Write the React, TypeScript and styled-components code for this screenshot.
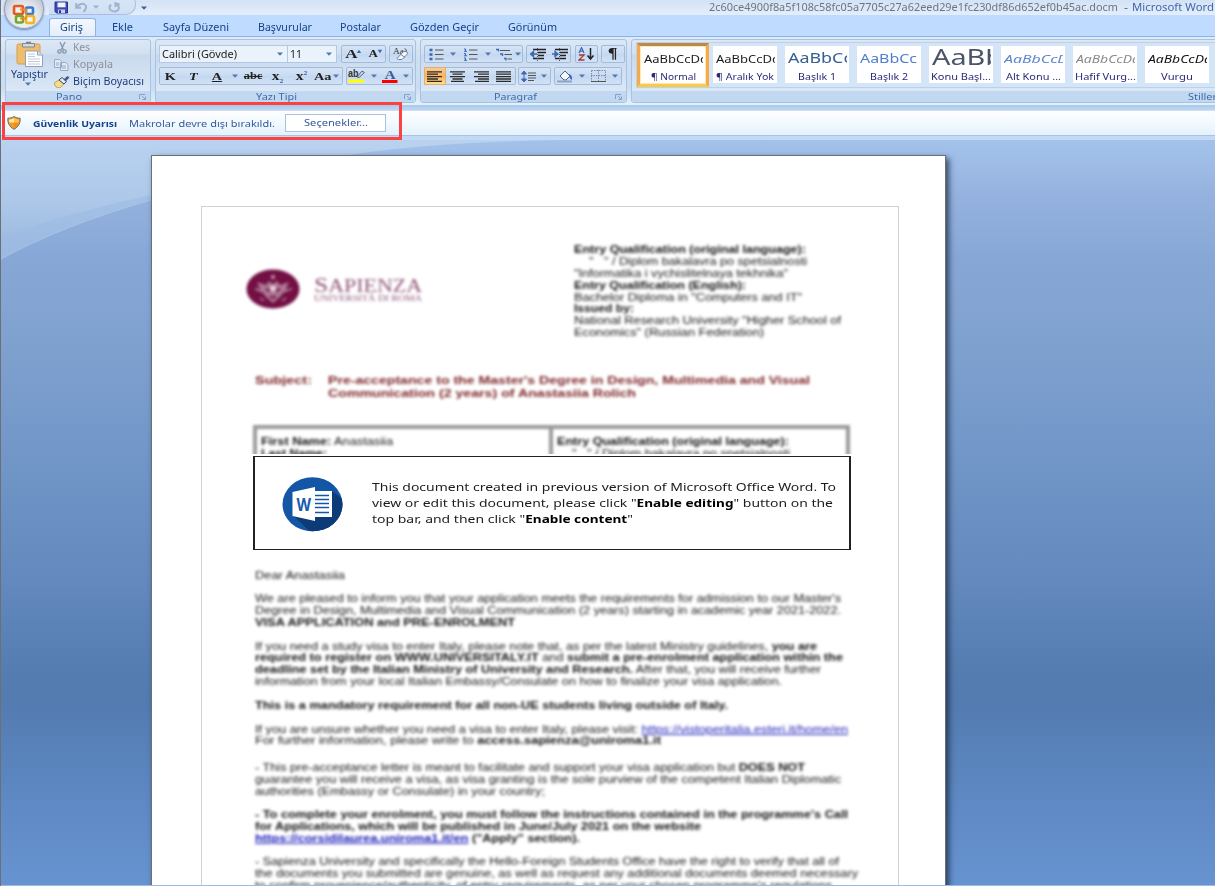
import React, { useLayoutEffect, useRef } from 'react';
import styled, { createGlobalStyle, css } from 'styled-components';

const Global = createGlobalStyle`
  * { box-sizing: border-box; }
  body { margin: 0; overflow: hidden; font-family: "Noto Sans", "Liberation Sans", sans-serif; }
`;

/* ---------- text stretched to a given width ---------- */
const FitBox = styled.span<{ $w: number; $ml?: number }>`
  display: block;
  flex: none;
  width: ${p => p.$w}px;
  margin-left: ${p => p.$ml || 0}px;
  white-space: pre;
`;
const FitInner = styled.span`
  display: inline-block;
  transform-origin: 0 50%;
`;
function Fit({ w, ml, children }: { w: number; ml?: number; children: React.ReactNode }) {
  const ref = useRef<HTMLSpanElement>(null);
  useLayoutEffect(() => {
    const el = ref.current;
    if (!el) return;
    el.style.transform = 'none';
    const natural = el.getBoundingClientRect().width;
    if (natural) el.style.transform = `scaleX(${w / natural})`;
  }, [w, children]);
  return (
    <FitBox $w={w} $ml={ml}>
      <FitInner ref={ref}>{children}</FitInner>
    </FitBox>
  );
}

/* ---------- window ---------- */
const Window = styled.div`
  position: relative;
  width: 1215px;
  height: 886px;
  overflow: hidden;
  display: flex;
  flex-direction: column;
  background: #bfdbff;
  border-left: 1px solid #6b6f76;
`;
const TitleBar = styled.header`
  flex: none;
  height: 15px;
  display: flex;
  align-items: center;
  padding-left: 48px;
  background: linear-gradient(#d3e2f5, #e4eefb);
`;
const QuickAccess = styled.div`
  flex: none;
  width: 87px;
  height: 21px;
  margin-top: -6px;
  padding: 5px 0 0 5px;
  display: flex;
  align-items: center;
  border: 1px solid #a9bfdd;
  border-left: none;
  border-radius: 0 10px 10px 0;
  background: linear-gradient(#dbe7f6, #cfdff3);
`;
const TitleText = styled.div`
  display: flex;
  height: 15px;
  margin-left: auto;
  padding-right: 1px;
  font-size: 10.5px;
  line-height: 14px;
  color: #6d7480;
`;
const AppName = styled.div`
  display: flex;
  color: #3f66ae;
`;
const OfficeButton = styled.div`
  position: absolute;
  left: 3px;
  top: -11px;
  width: 40px;
  height: 40px;
  border-radius: 50%;
  border: 1px solid #8f9db5;
  background: radial-gradient(circle at 50% 70%, #ffffff 0, #dfe3ea 45%, #b6bfce 80%, #e8ecf2 100%);
  box-shadow: 0 1px 2px rgba(60, 80, 120, 0.6);
  display: flex;
  align-items: center;
  justify-content: center;
  padding-top: 10px;
`;

const TabRow = styled.nav`
  flex: none;
  height: 21px;
  display: flex;
  align-items: flex-end;
  padding-left: 48px;
  font-size: 10px;
  line-height: 17px;
  color: #15428b;
  background: #bfdbff;
`;
const ActiveTab = styled.div`
  width: 47px;
  height: 18px;
  padding-left: 10px;
  border: 1px solid #8db2e3;
  border-bottom: none;
  border-radius: 3px 3px 0 0;
  background: linear-gradient(#f4f8fd, #e3edfa);
`;
const Tab = styled.div<{ $gap: number }>`
  height: 18px;
  padding-top: 1px;
  margin-left: ${p => p.$gap}px;
`;

/* ---------- ribbon ---------- */
const Ribbon = styled.section`
  flex: none;
  height: 69px;
  display: flex;
  padding: 2px 0 0 4px;
  border-top: 1px solid #8db2e3;
  background: linear-gradient(#dfeaf7, #d0e0f2 18px, #c9dcf2 50px, #dff0fa 66px, #dff3fb);
`;
const Group = styled.div<{ $w: number }>`
  flex: none;
  width: ${p => p.$w}px;
  height: 64px;
  margin-right: 4px;
  display: flex;
  flex-direction: column;
  border: 1px solid #a6c3e2;
  border-radius: 3px;
  background: linear-gradient(#dde8f5, #d1dfef 14px, #c9d9ed 15px, #dae8f7 52px);
  overflow: hidden;
`;
const GroupBody = styled.div`
  flex: 1;
  min-height: 0;
`;
const GroupLabel = styled.div<{ $pad: number }>`
  flex: none;
  height: 11px;
  padding: 0 3px 0 ${p => p.$pad}px;
  display: flex;
  align-items: center;
  justify-content: space-between;
  font-size: 9.5px;
  line-height: 11px;
  color: #3e6aaa;
  background: #c1d8f0;
`;

const ClipBody = styled(GroupBody)`
  display: flex;
`;
const Paste = styled.div`
  flex: none;
  width: 47px;
  padding: 1px 0 0 5px;
  display: flex;
  flex-direction: column;
  font-size: 10px;
  line-height: 12px;
  color: #1e3f80;
  > svg { display: block; flex: none; margin-left: 5px; }
  > svg:last-child { margin: 2px 0 0 14px; }
`;
const ClipList = styled.div`
  flex: none;
  display: flex;
  flex-direction: column;
  margin-top: -1px;
`;
const ClipItem = styled.div<{ $off?: boolean }>`
  height: 17px;
  display: flex;
  align-items: center;
  font-size: 10px;
  line-height: 17px;
  color: ${p => (p.$off ? '#8d8f96' : '#1e3f80')};
`;
const ClipIcon = styled.div`
  width: 20px;
  height: 17px;
  display: flex;
  align-items: center;
  padding-left: 1px;
`;

const ToolRow = styled.div<{ $top: number; $left: number }>`
  display: flex;
  height: 18px;
  margin-top: ${p => p.$top}px;
  padding-left: ${p => p.$left}px;
`;
const Combo = styled.div<{ $w: number }>`
  width: ${p => p.$w}px;
  height: 18px;
  display: flex;
  align-items: center;
  padding: 0 4px 0 2px;
  justify-content: space-between;
  font-size: 10px;
  line-height: 15px;
  color: #222;
  background: #eaf2fb;
  border: 1px solid #b1c8e6;
  & + & { border-left-width: 0; }
`;
const ButtonSet = styled.div<{ $w: number; $gap?: number }>`
  flex: none;
  width: ${p => p.$w}px;
  margin-left: ${p => p.$gap || 0}px;
  height: 18px;
  display: flex;
  align-items: center;
  border: 1px solid #a0bbdc;
  border-radius: 2px;
  background: linear-gradient(#d5e4f6, #c9dbf2 50%, #c3d7f0 51%, #d2e3f6);
`;
const Tool = styled.div<{ $w: number; $on?: boolean }>`
  flex: none;
  width: ${p => p.$w}px;
  height: 16px;
  display: flex;
  align-items: center;
  justify-content: center;
  color: #222;
  ${p => p.$on && css`
    margin: 0 0 0 -1px;
    height: 18px;
    border: 1px solid #e0b070;
    background: linear-gradient(#fbcb96, #fbb25c 50%, #ffdf85);
  `}
`;
const Glyph = styled.span<{ $size: number; $bold?: boolean; $italic?: boolean; $line?: string }>`
  font-family: "Liberation Serif", serif;
  font-size: ${p => p.$size}px;
  line-height: 14px;
  font-weight: ${p => (p.$bold ? 700 : 400)};
  font-style: ${p => (p.$italic ? 'italic' : 'normal')};
  text-decoration: ${p => p.$line || 'none'};
  transform: scaleX(1.3);
  white-space: nowrap;
  sup, sub { font-size: 6px; color: #3b67b2; line-height: 0; }
`;

/* ---------- style gallery ---------- */
const Gallery = styled.div`
  display: flex;
  margin: 2px 0 0 4px;
  width: 660px;
  height: 46px;
  border: 1px solid #bdd2ea;
  background: #d4e5f7;
`;
const Card = styled.div<{ $on?: boolean }>`
  flex: none;
  width: 72px;
  height: 44px;
  border: solid #d4e5f7;
  border-width: 3px 4px 4px;
  padding: 0 3px;
  background: #fff;
  overflow: hidden;
  ${p => p.$on && css`
    border: 3px solid #f5b343;
    border-color: #b98a4e #f5a947 #fbca45 #f5a947;
    padding: 0 4px;
    box-shadow: inset 0 0 1px 1px #ffe6b0;
  `}
`;
const Sample = styled.div<{ $size: number; $lh: number; $color: string; $italic?: boolean }>`
  width: 59px;
  height: 24px;
  overflow: hidden;
  font-size: ${p => p.$size}px;
  line-height: ${p => p.$lh}px;
  color: ${p => p.$color};
  font-style: ${p => (p.$italic ? 'italic' : 'normal')};
`;
const CardName = styled.div`
  height: 12px;
  display: flex;
  justify-content: center;
  font-size: 9.5px;
  line-height: 13px;
  color: #2a2a78;
`;

/* ---------- message bar ---------- */
const MessageArea = styled.section`
  flex: none;
  height: 35px;
  padding: 5px 0 4px;
  background: linear-gradient(#a9c6e8, #bcd4f3 4px, #c3daf7);
`;
const MessageBar = styled.div`
  height: 26px;
  display: flex;
  align-items: center;
  padding-left: 6px;
  border-top: 1px solid #cfe0f3;
  border-bottom: 1px solid #a9c3df;
  font-size: 9.5px;
  line-height: 25px;
  color: #33599b;
  background: linear-gradient(#fdfeff, #f2f9ff 50%, #e3f2fd);
  b { color: #15428b; }
`;
const OptionsButton = styled.div`
  width: 101px;
  height: 18px;
  margin-left: 10px;
  padding-left: 18px;
  line-height: 16px;
  border: 1px solid #a9c1dc;
  background: #fff;
`;
const Highlight = styled.div`
  position: absolute;
  left: 1px;
  top: 102px;
  width: 400px;
  height: 38px;
  border: 3px solid #fb4141;
`;

/* ---------- document ---------- */
const Desk = styled.main`
  position: relative;
  flex: 1;
  min-height: 0;
  padding: 15px 0 0 150px;
  overflow: hidden;
  border-bottom: 1px solid #9dbbe2;
  background: linear-gradient(#a3c2ea 0, #a0bfe8 15px, #95b2df 55px, #87a8d7 115px, #84a5d3 160px, #7297c8 310px, #6389be 440px, #557db2 530px, #537bb0 560px, #5f8ac5 670px, #6793d0 745px);
`;
const Swoosh = styled.svg`
  position: absolute;
  left: 0;
  top: 0;
`;
const Page = styled.article`
  position: relative;
  width: 795px;
  height: 740px;
  padding: 50px 0 0 49px;
  background: #fff;
  border: 1px solid #6a6f78;
  box-shadow: 3px 3px 6px rgba(20, 35, 60, 0.75);
`;
const Margins = styled.div`
  width: 698px;
  height: 720px;
  padding: 37px 0 0 45px;
  border: 1px solid #d2d2d2;
`;
const Blurred = styled.div`
  filter: blur(1.7px);
  font-family: "Liberation Sans", Arial, sans-serif;
  font-size: 10px;
  color: #111;
`;
const Line = styled.div<{ $gap?: number; $left?: number; $h?: number }>`
  height: ${p => p.$h || 11.9}px;
  line-height: 12px;
  margin-top: ${p => p.$gap || 0}px;
  padding-left: ${p => p.$left || 0}px;
  white-space: nowrap;
  a { color: #1717b8; text-decoration: underline; }
`;
const Letterhead = styled(Blurred)`
  display: flex;
  height: 127px;
`;
const Brand = styled.div`
  width: 327px;
  padding-top: 25px;
  display: flex;
  svg { flex: none; margin-left: -1px; }
`;
const BrandText = styled.div`
  padding: 8px 0 0 14px;
  font-family: "Liberation Serif", serif;
  color: #8d5478;
  font-size: 18px;
  line-height: 18px;
  small { display: block; font-size: 7.5px; line-height: 8px; }
  big { font-size: 21px; line-height: 0; }
`;
const Subject = styled(Blurred)`
  display: flex;
  height: 52px;
  padding: 3px 0 0 8px;
  font-size: 11px;
  font-weight: 700;
  color: #7a1f22;
`;
const SubjectText = styled.div`
  margin-left: 16px;
`;
const TableClip = styled.div`
  height: 31px;
  margin: 0 0 2px 3px;
  padding: 2px 0 0 3px;
  overflow: hidden;
`;
const InfoTable = styled(Blurred)`
  display: grid;
  grid-template-columns: 295px 294px;
  width: 597px;
  height: 60px;
  border: 4px solid #999;
`;
const Cell = styled.div`
  padding: 7px 0 0 4px;
  & + & { border-left: 4px solid #999; margin-left: -3px; }
`;
const Notice = styled.section`
  width: 598px;
  height: 94px;
  margin: 0 0 0 6px;
  display: flex;
  border: solid #222;
  border-width: 1.6px 2px;
  background: #fff;
`;
const NoticeIcon = styled.div`
  padding: 20px 0 0 27px;
`;
const NoticeText = styled.div`
  padding: 22px 0 0 29px;
  font-size: 11.5px;
  line-height: 16px;
  color: #1c1c1c;
  b { color: #000; font-size: 11.2px; line-height: 0; }
`;
const Letter = styled(Blurred)`
  padding: 19.5px 0 0 8px;
`;

/* ---------- icons ---------- */
const Arrow = ({ c = '#4f78b5' }: { c?: string }) => (
  <svg width="6" height="4" viewBox="0 0 6 4"><path d="M0 .5h6L3 3.7z" fill={c} /></svg>
);
const Launcher = () => (
  <svg width="8" height="8" viewBox="0 0 8 8"><path d="M.5 6V1.5H6M3 3l3 3M6.5 3.5v3h-3" fill="none" stroke="#7fa2cc" /></svg>
);
const OfficeLogo = () => (
  <svg width="24" height="22" viewBox="0 0 24 22" fill="none" strokeWidth="2.6">
    <rect x="2" y="3" width="9" height="8" rx="1.5" stroke="#e8591c" />
    <rect x="14" y="4.500" width="7" height="6.500" rx="1.5" stroke="#3779cf" />
    <rect x="4" y="13" width="7" height="6.500" rx="1.5" stroke="#71a92b" />
    <rect x="14" y="13" width="8" height="7" rx="1.5" stroke="#f4b51d" />
    <path d="M8 6.500h6v5M8 15.500h6v-3" stroke="#f08b23" strokeWidth="1.8" />
  </svg>
);
const Floppy = () => (
  <svg width="15" height="13" viewBox="0 0 15 13">
    <path d="M1 1h12.5v11H2.5L1 10.5z" fill="#3f49b5" stroke="#2b3390" />
    <path d="M3.5 1.5h8v4.8h-8z" fill="#eef3fc" /><path d="M4 8.5h7V12H4z" fill="#c9d1ec" /><path d="M5 9.2h2V12H5z" fill="#2b3390" />
  </svg>
);
const Undo = () => (
  <svg width="13" height="11" viewBox="0 0 13 11"><path d="M1.200 1v4.800H6M1.500 5.500Q5 1 9 2q4.500 2.500-.5 8" fill="none" stroke="#9fb2d0" strokeWidth="2" /></svg>
);
const Redo = () => (
  <svg width="13" height="11" viewBox="0 0 13 11"><path d="M3 2.500Q0 6 3 8.500q3.500 2 6.500 0 3-3-.5-6M7 2h4.500M7.500 0v5" fill="none" stroke="#9fb2d0" strokeWidth="2" /></svg>
);
const PasteIcon = () => (
  <svg width="28" height="27" viewBox="0 0 28 27">
    <rect x="1" y="3" width="23" height="20" rx="1.500" fill="#efbe6c" stroke="#d3a053" />
    <path d="M6.500 2.500h12v3.500h-12z" fill="#d4d8de" stroke="#7f8894" /><path d="M10 1.300h5" stroke="#666" />
    <path d="M9.500 10h12l5 4v11.500h-17z" fill="#fff" stroke="#8ca0c0" /><path d="M21.500 10v4h5" fill="#dbe4f1" stroke="#8ca0c0" />
    <path d="M12 13h7M12 15.500h7M12 18h12M12 20.500h12M12 23h12" stroke="#b7c3d8" strokeWidth=".9" />
  </svg>
);
const Cut = () => (
  <svg width="15" height="12" viewBox="-2 0 15 12" fill="none" stroke="#8796ae" strokeWidth="1.300">
    <path d="M4 0l3.500 8M9 0 5 8" /><circle cx="3.500" cy="9.500" r="1.700" /><circle cx="8.500" cy="9.500" r="1.700" />
  </svg>
);
const Copy = () => (
  <svg width="15" height="12" viewBox="0 0 15 12" fill="#e3eaf5" stroke="#98a9c6">
    <path d="M.5.5h5l2 2v6h-7zM6.500 3.500h5l2.500 2v6H6.500z" /><path d="M2 4h3M2 6h3M8 7h4M8 9h4" />
  </svg>
);
const Brush = () => (
  <svg width="16" height="12" viewBox="0 0 16 12">
    <path d="M0 7l5-3 5 4-4 4-4-1z" fill="#f3dc8e" stroke="#b08b35" strokeWidth=".7" /><path d="M5 4l3-2.500L12.500 5.500 10 8z" fill="#e8edf7" stroke="#3a4468" /><path d="M9.500 3.500 13.500 0l2 1.500-4 4z" fill="#46598e" />
  </svg>
);
const Shield = () => (
  <svg width="14" height="14" viewBox="0 0 14 14">
    <path d="M7 .6Q4 2.500.8 2.300.2 9.500 7 13.400 13.800 9.500 13.200 2.300 10 2.500 7 .6z" fill="#f59b23" stroke="#6b7078" />
    <path d="M7 2Q4.500 3.500 2 3.500q0 1.500.5 3H7z" fill="#ffe9a8" /><path d="M7 2q2.500 1.500 5 1.500 0 2-.5 3H7z" fill="#ffc04a" /><path d="M7 7h4.300Q10 10.500 7 12z" fill="#f28a1c" />
  </svg>
);
const Bullets = ({ numbered }: { numbered?: boolean }) => (
  <svg width="15" height="13" viewBox="0 0 15 13">
    {[2, 6.5, 11].map(y => (
      <g key={y}>
        {numbered ? <path d={`M1 ${y - 1}h1.500v2.500M1 ${y + 1.3}h3`} stroke="#3d68b4" fill="none" /> : <rect x=".5" y={y - 1.3} width="3" height="2.600" fill="#3d68b4" />}
        <path d={`M6 ${y}h8.500`} stroke="#555" />
      </g>
    ))}
  </svg>
);
const MultiLevel = () => (
  <svg width="17" height="13" viewBox="0 0 17 13">
    <path d="M0 1.500h2.500v2M4 6h2.500v2M8 10.500h2v2" stroke="#3d68b4" fill="none" strokeWidth="1.300" /><path d="M4 2.500h10M8.500 6.500H16M11.500 11H16" stroke="#555" />
  </svg>
);
const Indent = ({ right }: { right?: boolean }) => (
  <svg width="16" height="13" viewBox="0 0 16 13">
    <path d="M3 1.500h13M8 4.500h8M8 7.500h6M3 10.500h11" stroke="#222" strokeWidth="1.500" />
    <path d={right ? 'M0 6h4M3 3.500l3 2.500-3 2.500z' : 'M7 6H3M3.500 3.500l-3 2.500 3 2.500z'} stroke="#3d68b4" strokeWidth="1.300" fill="#3d68b4" />
    <path d="M7.500 0v13" stroke="#555" strokeDasharray="1 1" />
  </svg>
);
const Align = ({ d }: { d: string }) => (
  <svg width="16" height="11" viewBox="0 0 16 11"><path d={d} stroke="#2b2b2b" strokeWidth="1.300" /></svg>
);
const alignLeft = 'M0 .8h15M0 3.200h11M0 5.600h15M0 8h11M0 10.300h15';
const alignCenter = 'M0 .8h15M2.500 3.200h10M0 5.600h15M2.500 8h10M1 10.300h13';
const alignRight = 'M0 .8h15M4 3.200h11M0 5.600h15M4 8h11M1 10.300h14';
const alignFull = 'M0 .8h15M0 3.200h15M0 5.600h15M0 8h15M0 10.300h15';
const Sort = () => (
  <svg width="17" height="14" viewBox="0 0 17 14" fill="none">
    <path d="M1 6 3.500.5 6 6M2 4.200h3" stroke="#3d68b4" strokeWidth="1.200" /><path d="M1 8h5L1 13h5.500" stroke="#a33b3b" strokeWidth="1.300" />
    <path d="M12.500 1v10M9.500 8.500l3 3.500 3-3.500" stroke="#222" strokeWidth="1.500" />
  </svg>
);
const Spacing = () => (
  <svg width="16" height="13" viewBox="0 0 16 13">
    <path d="M3 2v9M.5 4 3 1l2.500 3zM.5 9 3 12l2.500-3z" stroke="#3d68b4" fill="#3d68b4" /><path d="M7 3h8M7 5.500h8M7 8h8M7 10.500h6" stroke="#555" />
  </svg>
);
const Bucket = () => (
  <svg width="17" height="13" viewBox="0 0 17 13">
    <path d="M3 6l5-5 5 5-4 4H7z" fill="#f3f6fb" stroke="#4d5f80" /><path d="M12 4q3.500 1 3 6-2-1-3-4z" fill="#3d68b4" /><path d="M0 11.500h15" stroke="#8fa3c2" strokeWidth="2" />
  </svg>
);
const Borders = () => (
  <svg width="15" height="12" viewBox="0 0 15 12" stroke="#7f8da6" fill="none">
    <path d="M.5.5h14v11M.5.5v11M7.500 0v12M0 5.500h15" strokeDasharray="1.500 1" /><path d="M0 11.500h15" stroke="#555" />
  </svg>
);
const Marker = () => (
  <svg width="18" height="14" viewBox="0 0 18 14">
    <path d="M0 10.500h16v3H0z" fill="#ffff00" />
    <text x="0" y="8" fontSize="10" fontWeight="700" fontFamily="Liberation Sans" textLength="10.500" lengthAdjust="spacingAndGlyphs" fill="#333">ab</text>
    <path d="M9 8l5-6 2.500 1.500L11 8.500z" fill="#c8d4e8" stroke="#51648a" />
  </svg>
);
const FontColor = () => (
  <svg width="16" height="14" viewBox="0 0 16 14">
    <text x="2.500" y="9.500" fontSize="12" fontWeight="700" fontFamily="Liberation Serif" textLength="11" lengthAdjust="spacingAndGlyphs" fill="#3a5a9a">A</text>
    <path d="M0 11h15.500v3H0z" fill="#f00" />
  </svg>
);
const ClearFormat = () => (
  <svg width="18" height="14" viewBox="0 0 18 14">
    <text x="1" y="6.500" fontSize="8" fontFamily="Liberation Serif" textLength="14" lengthAdjust="spacingAndGlyphs" fill="#333">Aa)</text>
    <path d="M5 11.500 11 5q2-1.500 4 0 1.500 1.500-.5 3L10 12.500H6.500z" fill="#f5f7fb" stroke="#7082a3" /><path d="M9 7.500l4 3" stroke="#7082a3" />
  </svg>
);
const Seal = () => (
  <svg width="54" height="40" viewBox="0 0 54 40">
    <ellipse cx="27" cy="20" rx="26.500" ry="19.500" fill="#720f43" />
    <path d="M11 13l9 3 3-4 4 3 4-3 3 4 9-3-3 7 5 1-8 3-3 4-7 6-7-6-3-4-8-3 5-1z" fill="#b98aa3" opacity=".85" />
    <circle cx="27" cy="8" r="2" fill="#c9a2b5" /><path d="M20 20l4 2M34 20l-4 2M24 27l3 2 3-2" stroke="#720f43" strokeWidth="2" fill="none" /><circle cx="27" cy="19.500" r="3" fill="#e7d3dc" />
    <path d="M14 29l4 3M40 29l-4 3M9 20h3M43 20h3" stroke="#b98aa3" strokeWidth="1.500" />
  </svg>
);
const WordIcon = () => (
  <svg width="61" height="55" viewBox="0 0 61 55">
    <defs><clipPath id="disc"><ellipse cx="30.500" cy="27.300" rx="30" ry="27" /></clipPath></defs>
    <ellipse cx="30.500" cy="27.300" rx="30" ry="27" fill="#1456a6" />
    <path d="M33 44 50 40V14l16 12v36H45z" fill="#0d3b78" clipPath="url(#disc)" />
    <path d="M12 39l16 16h30V30L50 40z" fill="#0d3b78" clipPath="url(#disc)" />
    <path d="M32 14h18v26H32z" fill="#fff" />
    <path d="M33 18.500h14M33 22.500h14M33 26.500h14M33 30.500h14M33 35.500h14" stroke="#1456a6" strokeWidth="1.500" />
    <path d="M10.500 15 33 10v34l-22.500-5z" fill="#fff" />
    <text x="14.500" y="33.500" fontFamily="Noto Sans" fontWeight="700" fontSize="18" textLength="14.500" lengthAdjust="spacingAndGlyphs" fill="#1a5cac">W</text>
  </svg>
);

const cards = [
  { s: 'AaBbCcDd', sw: 64, size: 11, c: '#1d1d1d', n: '¶ Normal', nw: 45, on: true },
  { s: 'AaBbCcDd', sw: 64, size: 11, c: '#1d1d1d', n: '¶ Aralık Yok', nw: 58 },
  { s: 'AaBbCc', sw: 64, size: 13.5, c: '#365f91', n: 'Başlık 1', nw: 38 },
  { s: 'AaBbCc', sw: 57, size: 13, c: '#4f7fcb', n: 'Başlık 2', nw: 38 },
  { s: 'AaBb', sw: 71, size: 22, c: '#4a5568', n: 'Konu Başl...', nw: 60, lh: 20 },
  { s: 'AaBbCcD', sw: 64, size: 11.5, c: '#5d86d2', n: 'Alt Konu ...', nw: 55, it: true },
  { s: 'AaBbCcDd', sw: 64, size: 11, c: '#8a8a8a', n: 'Hafif Vurg...', nw: 61, it: true },
  { s: 'AaBbCcDd', sw: 64, size: 11, c: '#111', n: 'Vurgu', nw: 32, it: true },
];

const tabs: [string, number, number][] = [
  ['Ekle', 21, 16],
  ['Sayfa Düzeni', 66, 30],
  ['Başvurular', 54, 29],
  ['Postalar', 41, 28],
  ['Gözden Geçir', 69, 29],
  ['Görünüm', 49, 29],
];

export default function App() {
  return (
    <Window>
      <Global />
      <TitleBar>
        <QuickAccess>
          <Floppy />
          <Tool $w={24}><Undo /></Tool>
          <Arrow c="#9fb2d0" />
          <Tool $w={31}><Redo /></Tool>
        </QuickAccess>
        <Tool $w={16}><Arrow c="#3f5f95" /></Tool>
        <TitleText>
          <Fit w={409}>2c60ce4900f8a5f108c58fc05a7705c27a62eed29e1fc230df86d652ef0b45ac.docm</Fit>
          <AppName><Fit w={4} ml={6}>-</Fit><Fit w={82} ml={4}>Microsoft Word</Fit></AppName>
        </TitleText>
      </TitleBar>
      <TabRow>
        <ActiveTab><Fit w={23}>Giriş</Fit></ActiveTab>
        {tabs.map(([t, w, g]) => <Tab key={t} $gap={g}><Fit w={w}>{t}</Fit></Tab>)}
      </TabRow>
      <OfficeButton><OfficeLogo /></OfficeButton>

      <Ribbon>
        <Group $w={146}>
          <ClipBody>
            <Paste>
              <PasteIcon />
              <Fit w={37}>Yapıştır</Fit>
              <Arrow />
            </Paste>
            <ClipList>
              <ClipItem $off><ClipIcon><Cut /></ClipIcon><Fit w={17}>Kes</Fit></ClipItem>
              <ClipItem $off><ClipIcon><Copy /></ClipIcon><Fit w={40}>Kopyala</Fit></ClipItem>
              <ClipItem><ClipIcon><Brush /></ClipIcon><Fit w={71}>Biçim Boyacısı</Fit></ClipItem>
            </ClipList>
          </ClipBody>
          <GroupLabel $pad={50}><Fit w={26}>Pano</Fit><Launcher /></GroupLabel>
        </Group>
        <Group $w={261}>
          <GroupBody>
            <ToolRow $top={5} $left={3}>
              <Combo $w={129}><Fit w={75}>Calibri (Gövde)</Fit><Arrow /></Combo>
              <Combo $w={49}><Fit w={12}>11</Fit><Arrow /></Combo>
              <ButtonSet $w={45} $gap={4}>
                <Tool $w={22}><Glyph $size={13} $bold>A<sup>▴</sup></Glyph></Tool>
                <Tool $w={22}><Glyph $size={10} $bold>A<sup>▾</sup></Glyph></Tool>
              </ButtonSet>
              <ButtonSet $w={24} $gap={3}><Tool $w={22}><ClearFormat /></Tool></ButtonSet>
            </ToolRow>
            <ToolRow $top={4} $left={3}>
              <ButtonSet $w={184}>
                <Tool $w={20}><Glyph $size={11} $bold>K</Glyph></Tool>
                <Tool $w={26}><Glyph $size={11} $bold $italic>T</Glyph></Tool>
                <Tool $w={22}><Glyph $size={11} $bold $line="underline">A</Glyph></Tool>
                <Tool $w={13}><Arrow /></Tool>
                <Tool $w={24}><Glyph $size={9.5} $bold $line="line-through">abc</Glyph></Tool>
                <Tool $w={24}><Glyph $size={12} $bold>x<sub>2</sub></Glyph></Tool>
                <Tool $w={24}><Glyph $size={12} $bold>x<sup>2</sup></Glyph></Tool>
                <Tool $w={20}><Glyph $size={11} $bold>Aa</Glyph></Tool>
                <Arrow />
              </ButtonSet>
              <ButtonSet $w={67} $gap={3}>
                <Tool $w={20}><Marker /></Tool>
                <Tool $w={13}><Arrow /></Tool>
                <Tool $w={20}><FontColor /></Tool>
                <Tool $w={12}><Arrow /></Tool>
              </ButtonSet>
            </ToolRow>
          </GroupBody>
          <GroupLabel $pad={100}><Fit w={41}>Yazı Tipi</Fit><Launcher /></GroupLabel>
        </Group>
        <Group $w={207}>
          <GroupBody>
            <ToolRow $top={5} $left={3}>
              <ButtonSet $w={99}>
                <Tool $w={22}><Bullets /></Tool><Tool $w={11}><Arrow /></Tool>
                <Tool $w={24}><Bullets numbered /></Tool><Tool $w={11}><Arrow /></Tool>
                <Tool $w={22}><MultiLevel /></Tool><Arrow />
              </ButtonSet>
              <ButtonSet $w={45} $gap={3}>
                <Tool $w={22}><Indent /></Tool><Tool $w={22}><Indent right /></Tool>
              </ButtonSet>
              <ButtonSet $w={23} $gap={4}><Tool $w={21}><Sort /></Tool></ButtonSet>
              <ButtonSet $w={24} $gap={3}><Tool $w={22}><Glyph $size={14} $bold>¶</Glyph></Tool></ButtonSet>
            </ToolRow>
            <ToolRow $top={4} $left={3}>
              <ButtonSet $w={92}>
                <Tool $w={22} $on><Align d={alignLeft} /></Tool>
                <Tool $w={24}><Align d={alignCenter} /></Tool>
                <Tool $w={23}><Align d={alignRight} /></Tool>
                <Tool $w={22}><Align d={alignFull} /></Tool>
              </ButtonSet>
              <ButtonSet $w={33} $gap={2}>
                <Tool $w={20}><Spacing /></Tool><Tool $w={9}><Arrow /></Tool>
              </ButtonSet>
              <ButtonSet $w={68} $gap={3}>
                <Tool $w={21}><Bucket /></Tool><Tool $w={12}><Arrow /></Tool>
                <Tool $w={20}><Borders /></Tool><Tool $w={13}><Arrow /></Tool>
              </ButtonSet>
            </ToolRow>
          </GroupBody>
          <GroupLabel $pad={73}><Fit w={43}>Paragraf</Fit><Launcher /></GroupLabel>
        </Group>
        <Group $w={700}>
          <GroupBody>
            <Gallery>
              {cards.map((c, i) => (
                <Card key={i} $on={c.on}>
                  <Sample $size={c.size} $lh={c.lh || 25} $color={c.c} $italic={c.it}><Fit w={c.sw}>{c.s}</Fit></Sample>
                  <CardName><Fit w={c.nw}>{c.n}</Fit></CardName>
                </Card>
              ))}
            </Gallery>
          </GroupBody>
          <GroupLabel $pad={556}><Fit w={29}>Stiller</Fit></GroupLabel>
        </Group>
      </Ribbon>

      <MessageArea>
        <MessageBar>
          <Shield />
          <Fit w={84} ml={12}><b>Güvenlik Uyarısı</b></Fit>
          <Fit w={146} ml={12}>Makrolar devre dışı bırakıldı.</Fit>
          <OptionsButton><Fit w={64}>Seçenekler...</Fit></OptionsButton>
        </MessageBar>
      </MessageArea>

      <Desk>
        <Swoosh width="620" height="140" viewBox="0 0 620 140">
          <defs>
            <linearGradient id="sky" x1="0" y1="0" x2="0" y2="1">
              <stop offset="0" stopColor="#b9d2f0" /><stop offset=".5" stopColor="#adc8e9" /><stop offset="1" stopColor="#98b5de" />
            </linearGradient>
          </defs>
          <path d="M0 0H560Q440 2 354 14 240 30 150 60 60 86 0 119z" fill="url(#sky)" />
          <path d="M0 97Q75 71 150 55V60Q60 86 0 119z" fill="#9dbae3" opacity=".6" />
          <path d="M0 119Q60 86 150 60" stroke="#a8c2e7" fill="none" />
        </Swoosh>
        <Page>
          <Margins>
            <Letterhead>
              <Brand>
                <Seal />
                <BrandText>
                  <Fit w={108}><big>S</big>APIENZA</Fit>
                  <small><Fit w={108}>UNIVERSITÀ DI ROMA</Fit></small>
                </BrandText>
              </Brand>
              <div>
                <Line><Fit w={232}><b>Entry Qualification (original language):</b></Fit></Line>
                <Line $left={15}><Fit w={218}>"   " / Diplom bakalavra po spetsialnosti</Fit></Line>
                <Line><Fit w={214}>"Informatika i vychislitelnaya tekhnika"</Fit></Line>
                <Line><Fit w={172}><b>Entry Qualification (English):</b></Fit></Line>
                <Line><Fit w={228}>Bachelor Diploma in "Computers and IT"</Fit></Line>
                <Line><Fit w={60}><b>Issued by:</b></Fit></Line>
                <Line><Fit w={267}>National Research University "Higher School of</Fit></Line>
                <Line><Fit w={190}>Economics" (Russian Federation)</Fit></Line>
              </div>
            </Letterhead>
            <Subject>
              <Fit w={57}>Subject:</Fit>
              <SubjectText>
                <Line $h={13}><Fit w={482}>Pre-acceptance to the Master's Degree in Design, Multimedia and Visual</Fit></Line>
                <Line $h={13}><Fit w={308}>Communication (2 years) of Anastasiia Rolich</Fit></Line>
              </SubjectText>
            </Subject>
            <TableClip>
              <InfoTable>
                <Cell>
                  <Line><Fit w={132}><b>First Name:</b> Anastasiia</Fit></Line>
                  <Line><Fit w={66}><b>Last Name:</b></Fit></Line>
                </Cell>
                <Cell>
                  <Line><Fit w={232}><b>Entry Qualification (original language):</b></Fit></Line>
                  <Line $left={15}><Fit w={218}>"   " / Diplom bakalavra po spetsialnosti</Fit></Line>
                </Cell>
              </InfoTable>
            </TableClip>
            <Notice>
              <NoticeIcon><WordIcon /></NoticeIcon>
              <NoticeText>
                <Fit w={464}>This document created in previous version of Microsoft Office Word. To</Fit>
                <Fit w={461}>view or edit this document, please click "<b>Enable editing</b>" button on the</Fit>
                <Fit w={261}>top bar, and then click "<b>Enable content</b>"</Fit>
              </NoticeText>
            </Notice>
            <Letter>
              <Line><Fit w={90}>Dear Anastasiia</Fit></Line>
              <Line $gap={12}><Fit w={586}>We are pleased to inform you that your application meets the requirements for admission to our Master's</Fit></Line>
              <Line><Fit w={586}>Degree in Design, Multimedia and Visual Communication (2 years) starting in academic year 2021-2022.</Fit></Line>
              <Line><Fit w={260}><b>VISA APPLICATION and PRE-ENROLMENT</b></Fit></Line>
              <Line $gap={11.5}><Fit w={562}>If you need a study visa to enter Italy, please note that, as per the latest Ministry guidelines, <b>you are</b></Fit></Line>
              <Line><Fit w={588}><b>required to register on WWW.UNIVERSITALY.IT</b> and <b>submit a pre-enrolment application within the</b></Fit></Line>
              <Line><Fit w={566}><b>deadline set by the Italian Ministry of University and Research.</b> After that, you will receive further</Fit></Line>
              <Line><Fit w={527}>information from your local Italian Embassy/Consulate on how to finalize your visa application.</Fit></Line>
              <Line $gap={11.5}><Fit w={473}><b>This is a mandatory requirement for all non-UE students living outside of Italy.</b></Fit></Line>
              <Line $gap={12}><Fit w={593}>If you are unsure whether you need a visa to enter Italy, please visit: <a>https://vistoperitalia.esteri.it/home/en</a></Fit></Line>
              <Line><Fit w={406}>For further information, please write to <b>access.sapienza@uniroma1.it</b></Fit></Line>
              <Line $gap={15}><Fit w={550}>- This pre-acceptance letter is meant to facilitate and support your visa application but <b>DOES NOT</b></Fit></Line>
              <Line><Fit w={586}>guarantee you will receive a visa, as visa granting is the sole purview of the competent Italian Diplomatic</Fit></Line>
              <Line><Fit w={290}>authorities (Embassy or Consulate) in your country;</Fit></Line>
              <Line $gap={11.5}><Fit w={593}><b>- To complete your enrolment, you must follow the instructions contained in the programme's Call</b></Fit></Line>
              <Line><Fit w={446}><b>for Applications, which will be published in June/July 2021 on the website</b></Fit></Line>
              <Line><Fit w={325}><b><a>https://corsidilaurea.uniroma1.it/en</a> ("Apply" section).</b></Fit></Line>
              <Line $gap={11}><Fit w={584}>- Sapienza University and specifically the Hello-Foreign Students Office have the right to verify that all of</Fit></Line>
              <Line><Fit w={603}>the documents you submitted are genuine, as well as request any additional documents deemed necessary</Fit></Line>
              <Line><Fit w={577}>to confirm provenience/authenticity, of entry requirements, as per your chosen programme's regulations</Fit></Line>
            </Letter>
          </Margins>
        </Page>
      </Desk>
      <Highlight />
    </Window>
  );
}
